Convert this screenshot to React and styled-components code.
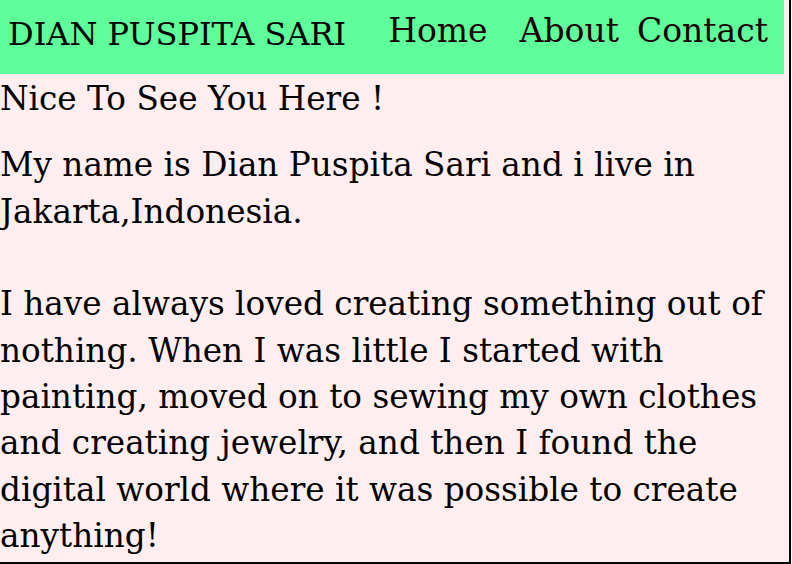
import React from 'react';
import styled, {createGlobalStyle} from 'styled-components';

const GlobalStyle = createGlobalStyle`
    html, body {
        margin: 0;
        padding: 0;
        overflow: hidden;
        background: #ffffff;
    }
`;

const Page = styled.div`
    box-sizing: border-box;
    width: 791px;
    height: 564px;
    background: #ffeeef;
    border-right: 2px solid #000;
    border-bottom: 2px solid #000;
    font-family: "DejaVu Serif", serif;
    color: #000;
    overflow: hidden;
`;

const Header = styled.header`
    box-sizing: border-box;
    width: 784px;
    height: 74px;
    background: #5eff9a;
    display: flex;
    align-items: flex-start;
    justify-content: space-between;
    padding: 0 16px 0 8px;
`;

const Brand = styled.div`
    font-size: 32px;
    line-height: 1;
    padding-top: 18px;
    white-space: nowrap;
`;

const Nav = styled.nav`
    display: flex;
    padding-top: 14px;
`;

const NavLink = styled.a`
    margin-left: ${props => props.space || 0}px;
    font-size: 33px;
    line-height: 1;
    color: #1c0000;
    text-decoration: none;
`;

const Content = styled.main`
    width: 785px;
    font-size: 32.7px;
    line-height: 46.4px;
`;

const Greeting = styled.p`
    margin: 2px 0 0;
`;

const Paragraph = styled.p`
    margin: ${props => props.gap}px 0 0;
`;

export default function App() {
    return (
        <Page>
            <GlobalStyle/>
            <Header>
                <Brand>DIAN PUSPITA SARI</Brand>
                <Nav>
                    <NavLink href="#">Home</NavLink>
                    <NavLink href="#" space={32}>About</NavLink>
                    <NavLink href="#" space={18}>Contact</NavLink>
                </Nav>
            </Header>
            <Content>
                <Greeting>Nice To See You Here !</Greeting>
                <Paragraph gap={20}>
                    My name is Dian Puspita Sari and i live in Jakarta,Indonesia.
                </Paragraph>
                <Paragraph gap={46}>
                    I have always loved creating something out of nothing. When I was little I started with
                    painting, moved on to sewing my own clothes and creating jewelry, and then I found the
                    digital world where it was possible to create anything!
                </Paragraph>
            </Content>
        </Page>
    );
}
